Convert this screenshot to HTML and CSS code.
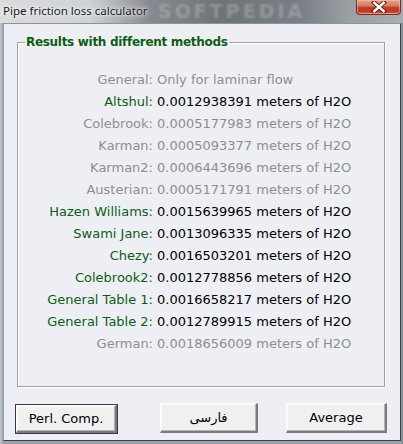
FILE: index.html
```html
<!DOCTYPE html>
<html>
<head>
<meta charset="utf-8">
<link rel="stylesheet" href="styles.css">
</head>
<body>
<div class="window">
  <div class="titlebar">
    <span class="title">Pipe friction loss calculator</span>
    <span class="watermark">SOFTPEDIA</span>
    <div class="close">
      <svg width="18" height="12" viewBox="0 0 18 12">
        <path d="M4 1.5 L14 10.5 M14 1.5 L4 10.5" stroke="#5a1e14" stroke-width="4.2" stroke-linecap="square"/>
        <path d="M4.3 1.8 L13.7 10.2 M13.7 1.8 L4.3 10.2" stroke="#ffffff" stroke-width="2.4" stroke-linecap="square"/>
      </svg>
    </div>
  </div>
  <div class="client">
    <fieldset class="group">
      <legend class="legend">Results with different methods</legend>
      <div class="rows">
        <span class="lbl off">General:</span><span class="val off">Only for laminar flow</span>
        <span class="lbl on">Altshul:</span><span class="val">0.0012938391 meters of H2O</span>
        <span class="lbl off">Colebrook:</span><span class="val off">0.0005177983 meters of H2O</span>
        <span class="lbl off">Karman:</span><span class="val off">0.0005093377 meters of H2O</span>
        <span class="lbl off">Karman2:</span><span class="val off">0.0006443696 meters of H2O</span>
        <span class="lbl off">Austerian:</span><span class="val off">0.0005171791 meters of H2O</span>
        <span class="lbl on">Hazen Williams:</span><span class="val">0.0015639965 meters of H2O</span>
        <span class="lbl on">Swami Jane:</span><span class="val">0.0013096335 meters of H2O</span>
        <span class="lbl on">Chezy:</span><span class="val">0.0016503201 meters of H2O</span>
        <span class="lbl on">Colebrook2:</span><span class="val">0.0012778856 meters of H2O</span>
        <span class="lbl on">General Table 1:</span><span class="val">0.0016658217 meters of H2O</span>
        <span class="lbl on">General Table 2:</span><span class="val">0.0012789915 meters of H2O</span>
        <span class="lbl off">German:</span><span class="val off">0.0018656009 meters of H2O</span>
      </div>
    </fieldset>
    <div class="buttons">
      <button class="btn btn-default btn-perl">Perl. Comp.</button>
      <button class="btn btn-farsi">فارسی</button>
      <button class="btn btn-avg">Average</button>
    </div>
  </div>
</div>
</body>
</html>
```
FILE: styles.css
```css
html, body {
  margin: 0;
  padding: 0;
}
body {
  width: 403px;
  height: 444px;
  overflow: hidden;
  background: linear-gradient(180deg, #8d9399 0%, #a9b0b7 50%, #596168 100%);
  font-family: "DejaVu Sans", Verdana, sans-serif;
}
.window {
  width: 403px;
  height: 444px;
  display: flex;
  flex-direction: column;
  background: linear-gradient(90deg, #c3cad2 0px, #9aa2aa 3px, #9aa2aa 400px, #7d848b 403px);
}
.titlebar {
  position: relative;
  height: 23px;
  display: flex;
  align-items: flex-start;
  background: linear-gradient(90deg, #dadcde 0px, #cfd2d5 90px, #878b90 150px, #6e7378 220px, #7a7f85 300px, #9ba0a5 350px, #a8adb2 403px);
}
.title {
  position: relative;
  z-index: 1;
  font-family: "Noto Sans", "Open Sans", sans-serif;
  font-size: 11.5px;
  color: #1a1a1a;
  padding: 3px 0 0 3px;
  line-height: 16px;
  text-shadow: 0 0 6px #ffffff, 0 0 3px #ffffff;
}
.watermark {
  position: absolute;
  left: 158px;
  top: 0;
  font-family: "DejaVu Sans", sans-serif;
  font-weight: bold;
  font-size: 19px;
  line-height: 22px;
  letter-spacing: 3px;
  color: rgba(200, 205, 210, 0.35);
  filter: blur(1.2px);
}
.close {
  position: absolute;
  right: 2px;
  top: 0;
  width: 45px;
  height: 15px;
  box-sizing: border-box;
  border: 1px solid #7a2a1c;
  border-top: none;
  border-radius: 0 0 4px 4px;
  background: linear-gradient(180deg, #e3a491 0%, #d57a63 40%, #c23e25 55%, #b93a22 80%, #d9705a 100%);
  box-shadow: inset 0 0 0 1px rgba(255, 200, 180, 0.5);
  display: flex;
  align-items: center;
  justify-content: center;
}
.client {
  flex: 1;
  margin: 0 2px 3px 3px;
  background: #eeeff4;
  border-top: 1px solid #8c949b;
  border-left: 1px solid #9aa3ab;
  border-right: 1px solid #3b4248;
  border-bottom: 1px solid #3b4248;
  display: flex;
  flex-direction: column;
  box-sizing: border-box;
}
.group {
  margin: 10px 0 0 13px;
  width: 368px;
  box-sizing: border-box;
  padding: 0 0 31px 0;
  border: 1px solid #a0a0a0;
  box-shadow: inset 1px 1px 0 #ffffff, 1px 1px 0 #ffffff;
  min-width: 0;
}
.legend {
  margin-left: 7px;
  padding: 0 1px;
  font-family: "DejaVu Sans", Verdana, sans-serif;
  font-weight: bold;
  font-size: 12px;
  letter-spacing: -0.3px;
  line-height: 16px;
  color: #0b5e12;
}
.rows {
  margin-top: 19px;
  display: grid;
  grid-template-columns: 135px auto;
  column-gap: 4px;
  font-size: 13px;
  line-height: 22px;
}
.lbl {
  text-align: right;
  white-space: nowrap;
}
.val {
  white-space: nowrap;
  color: #000000;
}
.on {
  color: #0b5e12;
}
.off {
  color: #8e8e8e;
}
.buttons {
  display: flex;
  align-items: flex-start;
  margin-top: 16px;
}
.btn {
  font-family: "DejaVu Sans", Verdana, sans-serif;
  font-size: 13px;
  color: #000;
  height: 30px;
  padding: 0;
  box-sizing: border-box;
  background: #f0f0f0;
  border-top: 1px solid #ffffff;
  border-left: 1px solid #ffffff;
  border-right: 2px solid #7b7b7b;
  border-bottom: 2px solid #7b7b7b;
  box-shadow: inset -1px -1px 0 #b4b4b4, inset 1px 1px 0 #f8f8f8;
  border-radius: 0;
}
.btn-default {
  outline: 1px solid #3a3a3a;
  outline-offset: 0;
  margin-top: 2px;
  height: 28px;
}
.btn-perl {
  width: 101px;
  margin-left: 12px;
}
.btn-farsi {
  width: 98px;
  margin-left: 43px;
  font-family: "DejaVu Sans", "Noto Sans", sans-serif;
}
.btn-avg {
  width: 101px;
  margin-left: 28px;
}
```
